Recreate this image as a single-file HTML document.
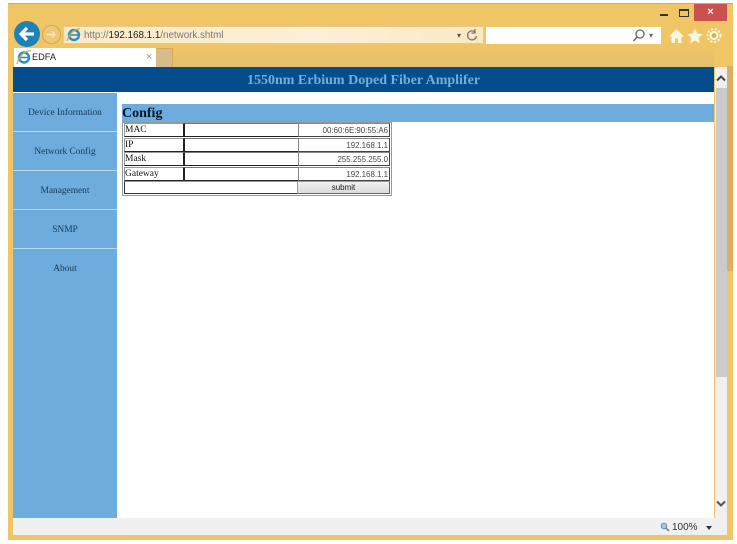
<!DOCTYPE html>
<html><head><meta charset="utf-8"><title>EDFA</title>
<style>
html,body{margin:0;padding:0;background:#fff;width:737px;height:544px;overflow:hidden}
body{filter:blur(.3px)}
div,span{position:absolute;box-sizing:border-box;white-space:nowrap}
.ser{font-family:"Liberation Serif",serif}
.san{font-family:"Liberation Sans",sans-serif}
.nav{left:13px;width:104px;height:39px;text-align:center;color:#123a5c;font:9.4px/40px "Liberation Serif",serif}
.ln{left:13px;width:104px;height:1px;background:#b5dcee}
.lab{left:124px;width:60px;height:14px;border:1px solid #222;border-top-color:#999;border-left-color:#999;background:#fff;font:9.5px/12px "Liberation Serif",serif;color:#111}
.mid{left:184px;width:115px;height:14px;background:#fff;border:1px solid #222;border-top-color:#777;border-right:0}
.inp{left:298px;width:92px;height:14px;background:#fff;border:1px solid #888;border-bottom-color:#444;border-right-color:#444;text-align:right;font:7.9px/13px "Liberation Sans",sans-serif;color:#444;padding-right:1px}
</style></head><body>
<!-- window frame -->
<div style="left:8px;top:3px;width:725px;height:537px;background:#f0c566;border-top:1px solid #c9ab6b"></div>
<div style="left:13px;top:48px;width:701px;height:19px;background:linear-gradient(#efc467,#e5be70)"></div>
<div style="left:727px;top:66px;width:6px;height:205px;background:#d9b160"></div>
<!-- close -->
<div style="left:694px;top:4px;width:33px;height:17px;background:#c9524f"></div>
<div class="san" style="left:694px;top:4px;width:33px;height:17px;text-align:center;color:#fff;font:bold 11px/17px 'Liberation Sans',sans-serif">×</div>
<div style="left:660px;top:14px;width:8px;height:2px;background:#333"></div>
<div style="left:679px;top:9px;width:10px;height:8px;border:1px solid #333;border-top-width:2px"></div>
<!-- back/forward -->
<div style="left:14px;top:21px;width:26px;height:26px;border-radius:50%;background:#1e82b8"></div>
<svg style="position:absolute;left:14px;top:21px" width="26" height="26"><path d="M20 13H8M13 7l-6 6 6 6" fill="none" stroke="#fff" stroke-width="3.2"/></svg>
<div style="left:42px;top:25px;width:19px;height:19px;border-radius:50%;border:1px solid #d4a94f;background:#efc877"></div>
<svg style="position:absolute;left:42px;top:25px" width="19" height="19"><path d="M5 9.5h8M10 6.5l3 3-3 3" fill="none" stroke="#f7e6c0" stroke-width="1.4"/></svg>
<!-- address -->
<div style="left:63px;top:26px;width:421px;height:18px;background:linear-gradient(90deg,#fbe9c6,#fdf0d8 60%,#fbe8c4);border:1px solid #e6c98b"></div>
<svg style="position:absolute;left:66px;top:27px" width="16" height="16"><circle cx="8" cy="8" r="5" fill="none" stroke="#2b8fc4" stroke-width="2.4"/><path d="M3 8h10" stroke="#2b8fc4" stroke-width="1.6"/><path d="M14 2C10 1 3 6 1 14" fill="none" stroke="#d8a93a" stroke-width="1.2"/></svg>
<div class="san" style="left:84px;top:28px;font-size:9.8px;line-height:15px;color:#777">http://<span style="position:static;color:#222">192.168.1.1</span>/network.shtml</div>
<div class="san" style="left:457px;top:29px;font-size:8px;line-height:14px;color:#555">▾</div>
<svg style="position:absolute;left:465px;top:28px" width="14" height="14"><path d="M10.5 4.5A4.5 4.5 0 1 0 11.5 8M10 1v4h-3.5" fill="none" stroke="#777" stroke-width="1.3"/></svg>
<!-- search -->
<div style="left:486px;top:27px;width:175px;height:17px;background:#fff"></div>
<svg style="position:absolute;left:632px;top:28px" width="14" height="15"><circle cx="8" cy="6" r="4" fill="none" stroke="#666" stroke-width="1.3"/><path d="M5 9l-3.500 4" stroke="#666" stroke-width="1.5"/></svg>
<div class="san" style="left:649px;top:29px;font-size:8px;line-height:14px;color:#666">▾</div>
<!-- toolbar icons -->
<svg style="position:absolute;left:668px;top:27px" width="58" height="18"><path d="M8.500 2L1 9.500h2.500V16h3.500v-4.500h3V16h3.500V9.500H16z" fill="#fdf6e3"/><path d="M27 1.500l2.300 5 5.400.6-4 3.700 1.100 5.400-4.800-2.700-4.800 2.700 1.100-5.400-4-3.700 5.400-.6z" fill="#fdf6e3"/><circle cx="46" cy="8.500" r="3.500" fill="#b5c35a" stroke="#fdf6e3" stroke-width="2"/><circle cx="46" cy="8.500" r="6.500" fill="none" stroke="#fdf6e3" stroke-width="1.800" stroke-dasharray="2.200 1.700"/></svg>
<!-- tab -->
<div style="left:14px;top:48px;width:142px;height:19px;background:#fff"></div>
<div style="left:156px;top:48px;width:17px;height:19px;background:#d6bd87;border-top:1px solid #d3ac5c;border-right:1px solid #d3ac5c"></div>
<svg style="position:absolute;left:16px;top:49px" width="16" height="16"><circle cx="8" cy="8.500" r="5" fill="none" stroke="#2b8fc4" stroke-width="2.400"/><path d="M3 8.500h10" stroke="#2b8fc4" stroke-width="1.600"/><path d="M15 2C10 1 3 6 1 15" fill="none" stroke="#d8a93a" stroke-width="1.200"/></svg>
<div class="san" style="left:32px;top:50px;font-size:9.2px;line-height:15px;color:#222">EDFA</div>
<div class="san" style="left:146px;top:50px;font-size:11px;line-height:15px;color:#999">×</div>
<!-- page -->
<div style="left:13px;top:67px;width:701px;height:451px;background:#fff"></div>
<div style="left:13px;top:67px;width:701px;height:25px;background:#044d8c"></div>
<div class="ser" style="left:13px;top:67px;width:701px;height:25px;text-align:center;color:#6fb0de;font-weight:bold;font-size:14px;line-height:27px">1550nm Erbium Doped Fiber Amplifer</div>
<!-- sidebar -->
<div style="left:13px;top:93px;width:104px;height:425px;background:#6dacdc"></div>
<div class="nav" style="top:93px">Device Information</div><div class="ln" style="top:131px"></div>
<div class="nav" style="top:132px">Network Config</div><div class="ln" style="top:170px"></div>
<div class="nav" style="top:171px">Management</div><div class="ln" style="top:209px"></div>
<div class="nav" style="top:210px">SNMP</div><div class="ln" style="top:248px"></div>
<div class="nav" style="top:249px">About</div>
<!-- content -->
<div style="left:122px;top:104px;width:592px;height:18px;background:#6dacdc"></div>
<div class="ser" style="left:122px;top:104px;font-weight:bold;font-size:14px;line-height:19px;color:#06162b">Config</div>
<div style="left:122px;top:122px;width:270px;height:74px;border:1px solid #999;background:#fff"></div>
<div class="lab" style="top:123px">MAC</div><div class="mid" style="top:123px"></div><div class="inp" style="top:123px">00:60:6E:90:55:A6</div>
<div class="lab" style="top:138px">IP</div><div class="mid" style="top:138px"></div><div class="inp" style="top:138px">192.168.1.1</div>
<div class="lab" style="top:152px">Mask</div><div class="mid" style="top:152px"></div><div class="inp" style="top:152px">255.255.255.0</div>
<div class="lab" style="top:167px">Gateway</div><div class="mid" style="top:167px"></div><div class="inp" style="top:167px">192.168.1.1</div>
<div style="left:124px;top:181px;width:266px;height:13px;border:1px solid #333;border-top-color:#999;border-right-color:#999;background:#fff"></div>
<div class="san" style="left:297px;top:181px;width:93px;height:13px;background:linear-gradient(#f0f0f0,#dcdcdc);border:1px solid #999;border-bottom-color:#666;border-right-color:#666;text-align:center;font-size:8px;line-height:11px;color:#222">submit</div>
<!-- scrollbar -->
<div style="left:715px;top:67px;width:12px;height:451px;background:#f0f0f0"></div>
<div style="left:716px;top:88px;width:11px;height:289px;background:#cbcbcb"></div>
<svg style="position:absolute;left:715px;top:72px" width="12" height="12"><path d="M2 8.500l4-4 4 4" fill="none" stroke="#444" stroke-width="2"/></svg>
<svg style="position:absolute;left:715px;top:498px" width="12" height="12"><path d="M2 3.500l4 4 4-4" fill="none" stroke="#555" stroke-width="2"/></svg>
<!-- status bar -->
<div style="left:13px;top:518px;width:714px;height:17px;background:#f0f0f0"></div>
<svg style="position:absolute;left:660px;top:522px" width="10" height="10"><circle cx="4" cy="4" r="2.800" fill="#a9c6dc" stroke="#6d93b0"/><path d="M6 6l3 3" stroke="#777" stroke-width="1.500"/></svg>
<div class="san" style="left:672px;top:521px;font-size:10px;line-height:14px;color:#333">100%</div>
<div style="left:706px;top:526px;width:0;height:0;border:3px solid transparent;border-top:4px solid #333;border-bottom:0"></div>
</body></html>
